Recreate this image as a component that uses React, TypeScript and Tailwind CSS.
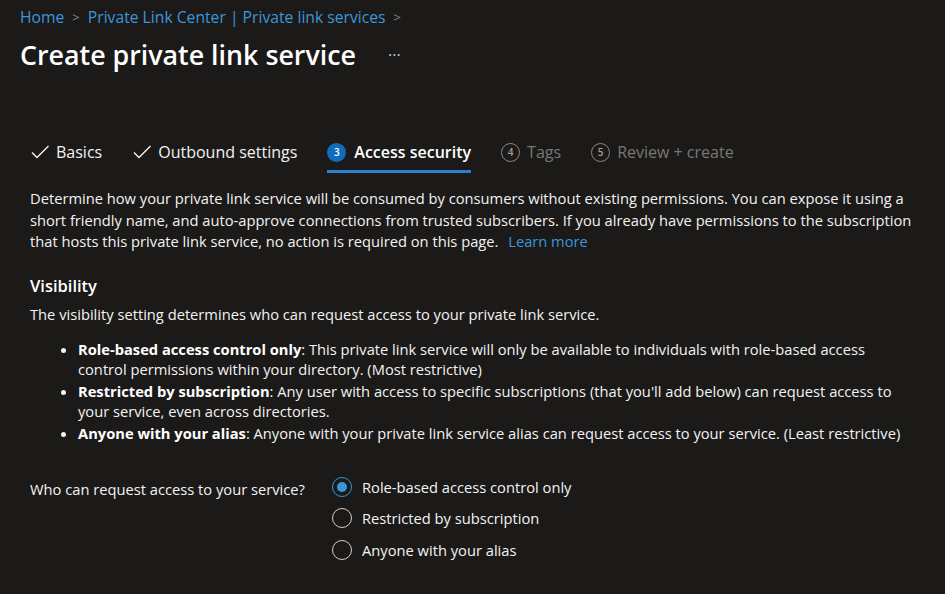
import React from "react";

const font = { fontFamily: '"Segoe UI", "Open Sans", "Noto Sans", sans-serif' };

function Check() {
  return (
    <svg width="20" height="20" viewBox="0 0 20 20" fill="none" className="shrink-0">
      <path d="M2 10.5l5 5L18.5 4" stroke="#f3f2f1" strokeWidth="1.4" />
    </svg>
  );
}

function Step({ n, active }: { n: number; active?: boolean }) {
  return active ? (
    <span className="flex h-[19px] w-[19px] items-center justify-center rounded-full bg-[#0f6cbd] text-[10px] text-white">
      {n}
    </span>
  ) : (
    <span className="flex h-[19px] w-[19px] items-center justify-center rounded-full border border-[#8a8886] text-[10px] font-semibold text-[#a19f9d]">
      {n}
    </span>
  );
}

function Radio({ checked, label }: { checked?: boolean; label: string }) {
  return (
    <label className="flex h-[31.5px] items-center gap-[10px]">
      {checked ? (
        <span className="flex h-[20px] w-[20px] items-center justify-center rounded-full border border-[#3a96dd]">
          <span className="h-[10px] w-[10px] rounded-full bg-[#3a96dd]" />
        </span>
      ) : (
        <span className="h-[20px] w-[20px] rounded-full border border-[#d2d0ce]" />
      )}
      <span>{label}</span>
    </label>
  );
}

export default function App() {
  return (
    <div className="min-h-screen bg-[#1b1a19] text-[14.7px] text-[#f3f2f1]" style={font}>
      <div className="px-[20px] pt-[6px]">
        <nav className="flex h-[24px] items-center gap-[8px] text-[15.7px] text-[#3a96dd]">
          <span>Home</span>
          <span className="text-[#8a8886] text-[13px]">&gt;</span>
          <span>Private Link Center | Private link services</span>
          <span className="text-[#8a8886] text-[13px]">&gt;</span>
        </nav>
        <div className="mt-[5px] flex items-center gap-[32px]">
          <h1 className="text-[26.8px] font-semibold text-white">Create private link service</h1>
          <span className="text-[16px] text-[#c8c6c4]">···</span>
        </div>
      </div>

      <div className="mt-[65px] px-[30px]">
        <div className="flex items-end gap-[30px] text-[16px]">
          <div className="flex items-center gap-[6px] pb-[9px]">
            <Check />
            <span>Basics</span>
          </div>
          <div className="flex items-center gap-[6px] pb-[9px]">
            <Check />
            <span>Outbound settings</span>
          </div>
          <div className="flex items-center gap-[8px] border-b-[3px] border-[#2c7fcf] pb-[6px] font-semibold text-white">
            <Step n={3} active />
            <span>Access security</span>
          </div>
          <div className="flex items-center gap-[7px] pb-[9px] text-[#797775]">
            <Step n={4} />
            <span>Tags</span>
          </div>
          <div className="flex items-center gap-[7px] pb-[9px] text-[#797775]">
            <Step n={5} />
            <span>Review + create</span>
          </div>
        </div>

        <p className="mt-[15px] leading-[21.5px]">
          Determine how your private link service will be consumed by consumers without existing permissions. You can expose it using a
          <br />
          short friendly name, and auto-approve connections from trusted subscribers. If you already have permissions to the subscription
          <br />
          that hosts this private link service, no action is required on this page.{" "}
          <span className="ml-[6px] text-[#3a96dd]">Learn more</span>
        </p>

        <h2 className="mt-[21px] text-[16.5px] font-semibold text-white">Visibility</h2>
        <p className="mt-[5px]">The visibility setting determines who can request access to your private link service.</p>

        <ul className="mt-[15px] list-disc pl-[48px] leading-[19.5px]">
          <li>
            <b className="font-bold text-white">Role-based access control only</b>: This private link service will only be available to individuals with role-based access
            <br />
            control permissions within your directory. (Most restrictive)
          </li>
          <li className="mt-[3px]">
            <b className="font-bold text-white">Restricted by subscription</b>: Any user with access to specific subscriptions (that you'll add below) can request access to
            <br />
            your service, even across directories.
          </li>
          <li className="mt-[3px]">
            <b className="font-bold text-white">Anyone with your alias</b>: Anyone with your private link service alias can request access to your service. (Least restrictive)
          </li>
        </ul>

        <div className="mt-[27px] flex">
          <div className="w-[302px] pt-[7px]">Who can request access to your service?</div>
          <div className="flex flex-col">
            <Radio checked label="Role-based access control only" />
            <Radio label="Restricted by subscription" />
            <Radio label="Anyone with your alias" />
          </div>
        </div>
      </div>
    </div>
  );
}
